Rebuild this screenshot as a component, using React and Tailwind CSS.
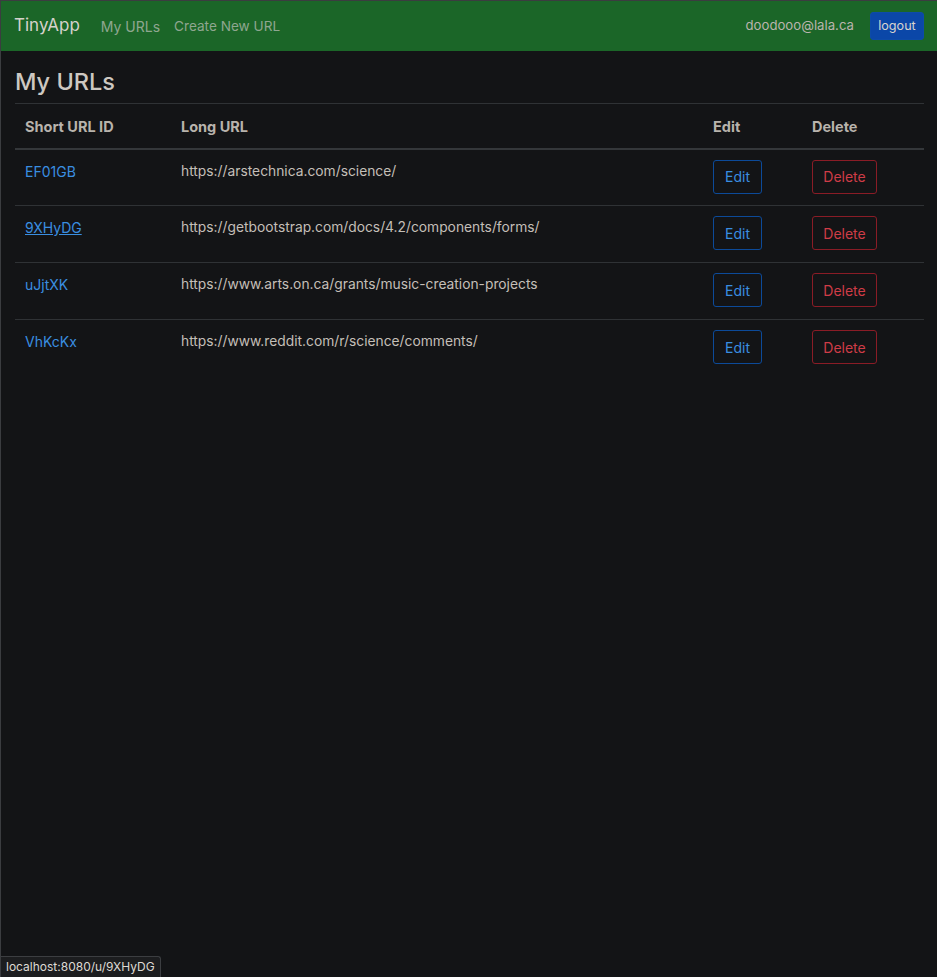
import React from "react";

const urls = [
  { id: "EF01GB", long: "https://arstechnica.com/science/" },
  { id: "9XHyDG", long: "https://getbootstrap.com/docs/4.2/components/forms/", hover: true },
  { id: "uJjtXK", long: "https://www.arts.on.ca/grants/music-creation-projects" },
  { id: "VhKcKx", long: "https://www.reddit.com/r/science/comments/" },
];

export default function App() {
  return (
    <div
      className="min-h-screen bg-[#131416] text-[#c9c4bd] border-l border-t border-[#3b3d40] relative"
      style={{ fontFamily: '"Inter", "Liberation Sans", sans-serif' }}
    >
      {/* navbar */}
      <nav className="h-[50px] bg-[#1b6628] flex items-center justify-between pl-[13px] pr-[13px]">
        <div className="flex items-center">
          <span className="text-[17px] text-[#d6d2cc] mr-[21px]">TinyApp</span>
          <a className="text-[14px] text-[#8fa690] mr-[14px]">My URLs</a>
          <a className="text-[13.6px] text-[#8fa690]">Create New URL</a>
        </div>
        <div className="flex items-center">
          <span className="text-[13.2px] text-[#b9b4ad] mr-[16px]">doodooo@lala.ca</span>
          <button className="h-[28px] w-[54px] rounded-[3px] bg-[#0b47a8] border border-[#0d4ba8] text-[12.6px] text-[#d8d4ce]">
            logout
          </button>
        </div>
      </nav>

      <main className="pl-[14px] pr-[13px]">
        <h3 className="text-[23.5px] font-medium text-[#cdc8c1] pt-[16px] pb-[7px] leading-[29px]">My URLs</h3>

        <table className="w-full border-collapse text-[14px]">
          <thead>
            <tr className="border-t border-[#2f3235] border-b-2 border-b-[#34373a]">
              <th className="w-[155px] text-left font-bold text-[14.5px] text-[#b8b3ac] px-[10px] h-[45px] pt-[2px]">Short URL ID</th>
              <th className="text-left font-bold text-[14.5px] text-[#b8b3ac] pl-[11px] pt-[2px]">Long URL</th>
              <th className="w-[99px] text-left font-bold text-[14.5px] text-[#b8b3ac] pl-[11px] pt-[2px]">Edit</th>
              <th className="w-[123px] text-left font-bold text-[14.5px] text-[#b8b3ac] pl-[11px] pt-[2px]">Delete</th>
            </tr>
          </thead>
          <tbody>
            {urls.map((u, i) => (
              <tr key={u.id} className={`h-[57px] ${i > 0 ? "border-t border-[#2f3235]" : ""}`}>
                <td className="align-top px-[10px] pt-[11px]">
                  <a className={`text-[#3a8ee0] ${u.hover ? "underline" : ""}`}>{u.id}</a>
                </td>
                <td className="align-top pl-[11px] pt-[11px] text-[13.8px] text-[#c4bfb8]">{u.long}</td>
                <td className="align-top pl-[11px] pt-[10px]">
                  <button className="h-[34px] w-[49px] rounded-[3px] border border-[#0c4a99] text-[#3a8ee0] text-[14px]">
                    Edit
                  </button>
                </td>
                <td className="align-top pl-[11px] pt-[10px]">
                  <button className="h-[34px] w-[65px] rounded-[3px] border border-[#8a1c26] text-[#cf3c47] text-[14px]">
                    Delete
                  </button>
                </td>
              </tr>
            ))}
          </tbody>
        </table>
      </main>

      {/* browser status overlay */}
      <div className="absolute left-0 bottom-0 h-[21px] px-[5px] flex items-center bg-[#1c1d1f] border-t border-r border-[#3c3e41] rounded-tr-[3px] text-[12px] text-[#dedad4]">
        localhost:8080/u/9XHyDG
      </div>
    </div>
  );
}
